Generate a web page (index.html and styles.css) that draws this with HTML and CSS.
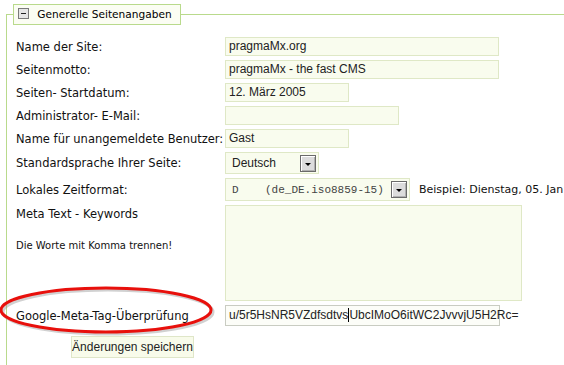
FILE: index.html
```html
<!DOCTYPE html>
<html lang="de">
<head>
    <meta charset="UTF-8">
    <title>Generelle Seitenangaben</title>
    <link rel="stylesheet" href="styles.css">
</head>
<body>
    <fieldset class="section">
        <legend class="section-title">
            <span class="toggle"></span>
            Generelle Seitenangaben
        </legend>
        <div class="settings">
            <label class="label">Name der Site:</label>
            <div class="field w-long">pragmaMx.org</div>

            <label class="label">Seitenmotto:</label>
            <div class="field w-long">pragmaMx - the fast CMS</div>

            <label class="label">Seiten- Startdatum:</label>
            <div class="field w-short">12. März 2005</div>

            <label class="label">Administrator- E-Mail:</label>
            <div class="field w-mid"></div>

            <label class="label">Name für unangemeldete Benutzer:</label>
            <div class="field w-short">Gast</div>

            <label class="label">Standardsprache Ihrer Seite:</label>
            <div class="select w-lang">
                <span class="select-text">Deutsch</span>
                <span class="select-btn"></span>
            </div>

            <label class="label">Lokales Zeitformat:</label>
            <div class="select-row">
                <div class="select w-time">
                    <span class="select-text mono">D    (de_DE.iso8859-15)</span>
                    <span class="select-btn"></span>
                </div>
                <span class="example">Beispiel: Dienstag, 05. Jan</span>
            </div>

            <div class="label label-top">
                Meta Text - Keywords
                <div class="hint">Die Worte mit Komma trennen!</div>
            </div>
            <div class="field textarea"></div>

            <label class="label">Google-Meta-Tag-Überprüfung</label>
            <div class="field w-google active">u/5r5HsNR5VZdfsdtvs<span class="caret"></span>UbcIMoO6itWC2JvvvjU5H2Rc=</div>
        </div>
        <div class="actions">
            <button type="button" class="save">Änderungen speichern</button>
        </div>

        <svg class="mark" width="224" height="56" viewBox="0 0 224 56">
            <ellipse cx="107" cy="26" rx="105" ry="22" fill="none" stroke="#9a9a9a" stroke-width="3" opacity="0.45" transform="translate(2 2)"/>
            <ellipse cx="107" cy="26" rx="105" ry="22" fill="none" stroke="#e8100c" stroke-width="3"/>
        </svg>
    </fieldset>
</body>
</html>
```

FILE: styles.css
```css
body {
    margin: 0;
    padding: 0;
    width: 564px;
    height: 365px;
    overflow: hidden;
    background: #fff;
    font-family: "DejaVu Sans", Verdana, sans-serif;
    font-size: 11.5px;
    color: #111;
}
.section {
    position: relative;
    margin: 4px 0 0 6px;
    padding: 12px 0 10px 9px;
    border: 1px solid #b9da8c;
    border-right: none;
    border-bottom: none;
}
.section-title {
    margin-left: -3px;
    padding: 0 8px 0 3px;
    height: 19px;
    line-height: 19px;
    border: 1px solid #b9da8c;
    background: #fbfdf3;
    color: #000;
    font-size: 10.6px;
}
.toggle {
    display: inline-block;
    position: relative;
    width: 9px;
    height: 9px;
    margin: 0 5px 0 1px;
    vertical-align: -1px;
    border: 1px solid #7a7a7a;
    background: #e6e6e6;
}
.toggle::after {
    content: "";
    position: absolute;
    left: 2px;
    top: 4px;
    width: 5px;
    height: 1px;
    background: #222;
}
.settings {
    display: grid;
    grid-template-columns: 209px auto;
    row-gap: 4px;
    align-items: center;
}
.label {
    white-space: nowrap;
}
.label-top {
    align-self: start;
    padding-top: 2px;
}
.hint {
    margin-top: 19px;
    font-size: 10px;
}
.field {
    box-sizing: border-box;
    height: 19px;
    padding: 0 3px;
    border: 1px solid #dfe8c6;
    background: #f9fcee;
    font-family: "Liberation Sans", Arial, sans-serif;
    font-size: 12px;
    line-height: 17px;
    color: #222;
    white-space: nowrap;
}
.w-long { width: 274px; }
.w-short { width: 124px; }
.w-mid { width: 174px; }
.w-google { width: 275px; height: 21px; line-height: 19px; }
.textarea { width: 297px; height: 96px; }
.active {
    border-color: #c9ccc2;
    background: #fcfdf8;
}
.caret {
    display: inline-block;
    width: 1px;
    height: 14px;
    background: #000;
    vertical-align: -3px;
}
.select-row {
    display: flex;
    align-items: center;
    overflow: hidden;
}
.select {
    box-sizing: border-box;
    height: 22px;
    display: flex;
    align-items: center;
    border: 1px solid #dfe8c6;
    background: #f9fcee;
}
.w-lang { width: 94px; }
.w-time { width: 185px; height: 23px; }
.select-text {
    flex: 1;
    padding-left: 6px;
    font-family: "Liberation Sans", Arial, sans-serif;
    font-size: 12px;
    color: #222;
    white-space: pre;
}
.mono {
    font-family: "Liberation Mono", "Courier New", monospace;
    font-size: 11px;
    color: #444;
}
.select-btn {
    position: relative;
    box-sizing: border-box;
    width: 16px;
    height: 17px;
    margin-right: 2px;
    border: 1px solid #6a6a6a;
    background: #dcdcdc;
    box-shadow: inset 1px 1px 0 #fff, inset -1px -1px 0 #b0b0b0;
}
.select-btn::after {
    content: "";
    position: absolute;
    left: 4px;
    top: 7px;
    border-left: 3px solid transparent;
    border-right: 3px solid transparent;
    border-top: 3px solid #000;
}
.example {
    margin-left: 9px;
    white-space: nowrap;
    font-size: 11px;
}
.actions {
    padding: 10px 0 0 55px;
}
.save {
    height: 22px;
    width: 123px;
    padding: 0;
    border: 1px solid #dfe6c8;
    background: #f8fbea;
    font-family: "Liberation Sans", Arial, sans-serif;
    font-size: 12px;
    color: #222;
}
.mark {
    position: absolute;
    left: -8px;
    top: 259px;
}
```
